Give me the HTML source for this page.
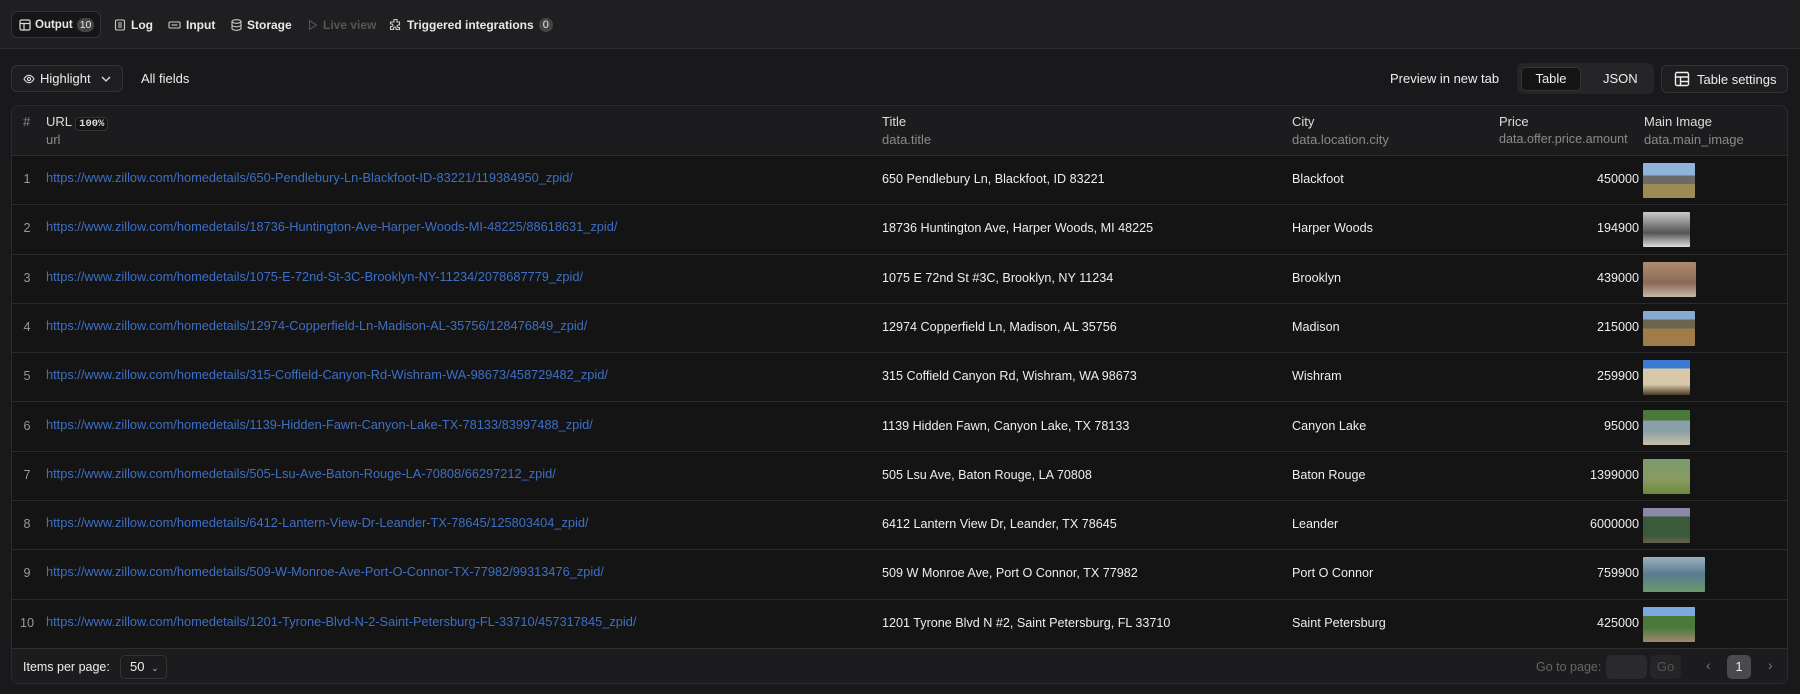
<!DOCTYPE html>
<html><head><meta charset="utf-8"><style>
*{box-sizing:border-box;margin:0;padding:0}
body{width:1800px;height:694px;background:#19191b;font-family:"Liberation Sans",sans-serif;color:#eee;position:relative;overflow:hidden;font-size:13px}
.abs{position:absolute}
.topbar{left:0;top:0;width:1800px;height:49px;background:#1f1f21;border-bottom:1px solid #2c2c2f}
.tab{position:absolute;top:11px;height:27px;display:flex;align-items:center;font-size:12px;font-weight:bold;color:#e8e8e8;gap:5px;white-space:nowrap}
.badge{background:#444;border-radius:8px;padding:1px 4px;font-size:11px;font-weight:normal}
.btn{position:absolute;border:1px solid #333;border-radius:6px;background:#1e1e20;display:flex;align-items:center;font-size:13px;color:#eee}
.table{left:11px;top:105px;width:1777px;height:579px;border:1px solid #2c2c2f;border-radius:8px;background:#141415;overflow:hidden}
.hdr{position:absolute;left:0;top:0;width:100%;height:50px;background:#1c1c1e;border-bottom:1px solid #2e2e30}
.h1{position:absolute;top:8px;font-size:13px;color:#ddd}
.h2{position:absolute;top:26px;font-size:13px;color:#8a8a8a}
.row{position:absolute;left:0;width:100%;height:49.3px;border-bottom:1px solid #2a2a2c}
.row span{position:absolute;top:16px;font-size:12.6px;color:#eee;white-space:nowrap}
.row .n{color:#999;width:30px;text-align:center;left:0}
.row .u{left:34px;top:14px;color:#3d6fc4;font-size:12.8px}
.row .p{right:148px;text-align:right}
.th{position:absolute;left:1631px;top:7px;height:35px;border-radius:1px}
.foot{position:absolute;left:0;top:543px;width:100%;height:36px;background:#1c1c1e}
</style></head><body>
<div class="abs topbar">
 <div class="tab" style="left:11px;width:90px;border:1px solid #333;border-radius:6px;background:#161618;padding-left:7px;gap:4px;font-size:11.5px">
  <svg width="12" height="12" viewBox="0 0 12 12" fill="none" stroke="#ddd" stroke-width="1.2" style="flex:none"><rect x="1" y="1" width="10" height="10" rx="1.5"/><path d="M1 4.5h10M5 4.5v6.5"/></svg>Output <span class="badge" style="font-size:10.5px;padding:1px 3px">10</span></div>
 <div class="tab" style="left:114px"><svg width="12" height="12" viewBox="0 0 12 12" fill="none" stroke="#ccc" stroke-width="1.1"><rect x="1.5" y="1" width="9" height="10" rx="1.5"/><path d="M4 4h4M4 6h4M4 8h4"/></svg>Log</div>
 <div class="tab" style="left:168px"><svg width="13" height="10" viewBox="0 0 13 10" fill="none" stroke="#ccc" stroke-width="1.1"><rect x="1" y="2" width="11" height="6" rx="1"/><path d="M3.5 5h6"/></svg>Input</div>
 <div class="tab" style="left:231px"><svg width="11" height="12" viewBox="0 0 11 12" fill="none" stroke="#ccc" stroke-width="1.1"><ellipse cx="5.5" cy="2.5" rx="4.5" ry="1.8"/><path d="M1 2.5v7c0 1 2 1.8 4.5 1.8S10 10.5 10 9.5v-7M1 6c0 1 2 1.8 4.5 1.8S10 7 10 6"/></svg>Storage</div>
 <div class="tab" style="left:308px;color:#555"><svg width="10" height="12" viewBox="0 0 10 12" fill="none" stroke="#555" stroke-width="1.1"><path d="M1.5 1.5l7 4.5-7 4.5z"/></svg>Live view</div>
 <div class="tab" style="left:389px"><svg width="13" height="13" viewBox="0 0 13 13" fill="none" stroke="#ccc" stroke-width="1.1"><path d="M5 1.5h3v2.5h2.5v3H9a1.3 1.3 0 000 2.5h1.5v2H7V10a1.3 1.3 0 00-2.5 0v1.5h-3v-3H3a1.3 1.3 0 000-2.5H1.5V4H5z"/></svg>Triggered integrations <span class="badge">0</span></div>
</div>

<div class="btn" style="left:11px;top:65px;width:112px;height:27px;padding-left:11px;gap:5px">
 <svg width="12" height="10" viewBox="0 0 12 10" fill="none" stroke="#ddd" stroke-width="1.1"><path d="M1 5c1.5-2.6 3-3.7 5-3.7S9.5 2.4 11 5c-1.5 2.6-3 3.7-5 3.7S2.5 7.6 1 5z"/><circle cx="6" cy="5" r="1.6"/></svg>
 Highlight <svg width="12" height="8" viewBox="0 0 12 8" fill="none" stroke="#ddd" stroke-width="1.3" style="margin-left:4px"><path d="M2 2l4 4 4-4"/></svg></div>
<div class="abs" style="left:141px;top:71px;font-size:13px">All fields</div>

<div class="abs" style="left:1390px;top:71px;font-size:13px">Preview in new tab</div>
<div class="abs" style="left:1517px;top:63px;width:137px;height:31px;background:#252527;border-radius:6px"></div>
<div class="abs" style="left:1521px;top:67px;width:60px;height:24px;background:#141415;border:1px solid #333;border-radius:5px;text-align:center;line-height:22px">Table</div>
<div class="abs" style="left:1603px;top:71px">JSON</div>
<div class="btn" style="left:1661px;top:65px;width:127px;height:28px;padding-left:12px;gap:7px">
 <svg width="16" height="16" viewBox="0 0 16 16" fill="none" stroke="#eee" stroke-width="1.4"><rect x="1.5" y="1.5" width="13" height="13" rx="1.5"/><path d="M1.5 6h13M6.5 6v8.5M6.5 10.5h8"/></svg>Table settings</div>

<div class="abs table">
 <div class="hdr">
  <div class="h1" style="left:11px;color:#888">#</div>
  <div class="h1" style="left:34px">URL <span style="font-family:'Liberation Mono',monospace;font-size:10.5px;font-weight:bold;border:1px solid #333;border-radius:4px;padding:0 3px;background:#141415">100%</span></div>
  <div class="h2" style="left:34px">url</div>
  <div class="h1" style="left:870px">Title</div><div class="h2" style="left:870px">data.title</div>
  <div class="h1" style="left:1280px">City</div><div class="h2" style="left:1280px">data.location.city</div>
  <div class="h1" style="left:1487px">Price</div><div class="h2" style="left:1487px;font-size:12.6px">data.offer.price.amount</div>
  <div class="h1" style="left:1632px">Main Image</div><div class="h2" style="left:1632px">data.main_image</div>
 </div>
 <div class="row" style="top:50px"><span class="n">1</span><span class="u">https://www.zillow.com/homedetails/650-Pendlebury-Ln-Blackfoot-ID-83221/119384950_zpid/</span><span style="left:870px">650 Pendlebury Ln, Blackfoot, ID 83221</span><span style="left:1280px">Blackfoot</span><span class="p">450000</span><div class="th" style="width:52px;background:linear-gradient(#8fb3da 0 35%,#6d6a66 35% 60%,#9c8a55 60%)"></div></div>
 <div class="row" style="top:99.3px"><span class="n">2</span><span class="u">https://www.zillow.com/homedetails/18736-Huntington-Ave-Harper-Woods-MI-48225/88618631_zpid/</span><span style="left:870px">18736 Huntington Ave, Harper Woods, MI 48225</span><span style="left:1280px">Harper Woods</span><span class="p">194900</span><div class="th" style="width:47px;background:linear-gradient(#c9c9c9,#555 60%,#ddd)"></div></div>
 <div class="row" style="top:148.6px"><span class="n">3</span><span class="u">https://www.zillow.com/homedetails/1075-E-72nd-St-3C-Brooklyn-NY-11234/2078687779_zpid/</span><span style="left:870px">1075 E 72nd St #3C, Brooklyn, NY 11234</span><span style="left:1280px">Brooklyn</span><span class="p">439000</span><div class="th" style="width:53px;background:linear-gradient(#b08a70,#8a6a55 60%,#c8b8a8)"></div></div>
 <div class="row" style="top:197.9px"><span class="n">4</span><span class="u">https://www.zillow.com/homedetails/12974-Copperfield-Ln-Madison-AL-35756/128476849_zpid/</span><span style="left:870px">12974 Copperfield Ln, Madison, AL 35756</span><span style="left:1280px">Madison</span><span class="p">215000</span><div class="th" style="width:52px;background:linear-gradient(#88aad0 0 25%,#6b6550 25% 50%,#a07c48 50%)"></div></div>
 <div class="row" style="top:247.2px"><span class="n">5</span><span class="u">https://www.zillow.com/homedetails/315-Coffield-Canyon-Rd-Wishram-WA-98673/458729482_zpid/</span><span style="left:870px">315 Coffield Canyon Rd, Wishram, WA 98673</span><span style="left:1280px">Wishram</span><span class="p">259900</span><div class="th" style="width:47px;background:linear-gradient(#3a7bd5 0 25%,#d8c8a8 25% 70%,#4a3a28)"></div></div>
 <div class="row" style="top:296.5px"><span class="n">6</span><span class="u">https://www.zillow.com/homedetails/1139-Hidden-Fawn-Canyon-Lake-TX-78133/83997488_zpid/</span><span style="left:870px">1139 Hidden Fawn, Canyon Lake, TX 78133</span><span style="left:1280px">Canyon Lake</span><span class="p">95000</span><div class="th" style="width:47px;background:linear-gradient(#4a7a3a 0 30%,#8aa0a8 30% 60%,#c8c0a8)"></div></div>
 <div class="row" style="top:345.8px"><span class="n">7</span><span class="u">https://www.zillow.com/homedetails/505-Lsu-Ave-Baton-Rouge-LA-70808/66297212_zpid/</span><span style="left:870px">505 Lsu Ave, Baton Rouge, LA 70808</span><span style="left:1280px">Baton Rouge</span><span class="p">1399000</span><div class="th" style="width:47px;background:linear-gradient(#7a9a70,#8a9a60 60%,#6a8a3a)"></div></div>
 <div class="row" style="top:395.1px"><span class="n">8</span><span class="u">https://www.zillow.com/homedetails/6412-Lantern-View-Dr-Leander-TX-78645/125803404_zpid/</span><span style="left:870px">6412 Lantern View Dr, Leander, TX 78645</span><span style="left:1280px">Leander</span><span class="p">6000000</span><div class="th" style="width:47px;background:linear-gradient(#8a8aa8 0 25%,#3a5a3a 25% 80%,#6a6050)"></div></div>
 <div class="row" style="top:444.4px"><span class="n">9</span><span class="u">https://www.zillow.com/homedetails/509-W-Monroe-Ave-Port-O-Connor-TX-77982/99313476_zpid/</span><span style="left:870px">509 W Monroe Ave, Port O Connor, TX 77982</span><span style="left:1280px">Port O Connor</span><span class="p">759900</span><div class="th" style="width:62px;background:linear-gradient(#9ab0c0,#5a7a90 50%,#6a9a6a)"></div></div>
 <div class="row" style="top:493.7px;border-bottom:1px solid #2e2e30"><span class="n">10</span><span class="u">https://www.zillow.com/homedetails/1201-Tyrone-Blvd-N-2-Saint-Petersburg-FL-33710/457317845_zpid/</span><span style="left:870px">1201 Tyrone Blvd N #2, Saint Petersburg, FL 33710</span><span style="left:1280px">Saint Petersburg</span><span class="p">425000</span><div class="th" style="width:52px;background:linear-gradient(#7aaae0 0 25%,#4a7a3a 25% 60%,#a08870)"></div></div>
 <div class="foot">
  <div class="abs" style="left:11px;top:11px;font-size:12.5px">Items per page:</div>
  <div class="abs" style="left:108px;top:6px;width:47px;height:24px;border:1px solid #333;border-radius:5px;padding-left:9px;line-height:22px">50 <span style="font-size:9px;color:#bbb;margin-left:3px">&#8964;</span></div>
  <div class="abs" style="left:1524px;top:11px;color:#666;font-size:12.5px">Go to page:</div>
  <div class="abs" style="left:1594px;top:6px;width:41px;height:24px;background:#2a2a2c;border-radius:5px"></div>
  <div class="abs" style="left:1638px;top:6px;width:31px;height:24px;background:#252527;border-radius:5px;color:#555;text-align:center;line-height:24px">Go</div>
  <div class="abs" style="left:1694px;top:8px;color:#777;font-size:14px">&#8249;</div>
  <div class="abs" style="left:1715px;top:6px;width:24px;height:24px;background:#4a4a4e;border-radius:5px;text-align:center;line-height:24px">1</div>
  <div class="abs" style="left:1756px;top:8px;color:#777;font-size:14px">&#8250;</div>
 </div>
</div>
</body></html>
